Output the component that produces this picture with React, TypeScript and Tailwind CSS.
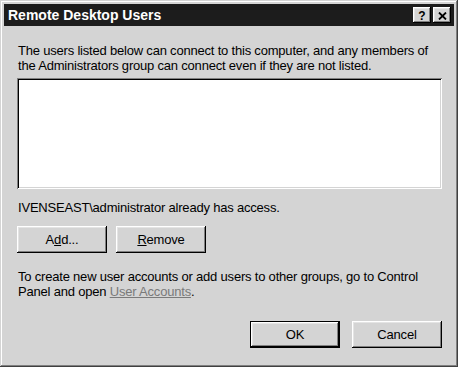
import React from 'react';

const raised =
  'shadow-[inset_-1px_-1px_#000000,inset_1px_1px_#ffffff,inset_-2px_-2px_#808080,inset_2px_2px_#e4e4e4]';

function Button({ children, isDefault = false }: { children: React.ReactNode; isDefault?: boolean }) {
  return (
    <button
      className={`w-[90px] h-[27px] bg-[#d4d4d4] flex items-center justify-center text-[13px] text-black ${
        isDefault
          ? 'border border-black shadow-[inset_-1px_-1px_#000000,inset_1px_1px_#ffffff,inset_-2px_-2px_#808080,inset_2px_2px_#e4e4e4]'
          : raised
      }`}
    >
      {children}
    </button>
  );
}

function TitleButton({ children }: { children: React.ReactNode }) {
  return (
    <div className={`w-[18px] h-[16px] bg-[#d4d4d4] flex items-center justify-center ${raised}`}>
      {children}
    </div>
  );
}

export default function App() {
  return (
    <div
      className="w-[458px] h-[367px] bg-[#d4d4d4] p-[4px] flex flex-col shadow-[inset_-1px_-1px_#404040,inset_1px_1px_#d4d4d4,inset_-2px_-2px_#808080,inset_2px_2px_#ffffff]"
      style={{ fontFamily: '"Liberation Sans", Arial, sans-serif' }}
    >
      {/* Title bar */}
      <div className="h-[22px] bg-[#1c1c1c] flex items-center justify-between pl-[4px] pr-[3px]">
        <span className="text-white font-bold text-[14px] leading-none">Remote Desktop Users</span>
        <div className="flex gap-[2px]">
          <TitleButton>
            <span className="text-black font-bold text-[12px] leading-none mt-[1px]">?</span>
          </TitleButton>
          <TitleButton>
            <svg width="9" height="8" viewBox="0 0 9 8" className="mt-[1px]">
              <path d="M1 0.5 L8 7.5 M8 0.5 L1 7.5" stroke="#000" strokeWidth="1.8" />
            </svg>
          </TitleButton>
        </div>
      </div>

      {/* Body */}
      <div className="flex-1 flex flex-col pl-[13px] pr-[12px] pt-[17px] text-[13px] text-black tracking-[-0.2px]">
        <p className="leading-[15px] pl-[1px]">
          The users listed below can connect to this computer, and any members of the
          Administrators group can connect even if they are not listed.
        </p>

        <div className="mt-[5px] h-[111px] bg-white shadow-[inset_1px_1px_#808080,inset_-1px_-1px_#ffffff,inset_2px_2px_#000000,inset_-2px_-2px_#d4d4d4]" />

        <p className="mt-[11px] leading-[15px] pl-[1px]">IVENSEAST\administrator already has access.</p>

        <div className="mt-[11px] flex gap-[9px]">
          <Button>
            A<span className="underline">d</span>d...
          </Button>
          <Button>
            <span className="underline">R</span>emove
          </Button>
        </div>

        <p className="mt-[16px] leading-[15px] pl-[1px]">
          To create new user accounts or add users to other groups, go to Control Panel and open{' '}
          <span className="text-[#7a7a7a] underline">User Accounts</span>.
        </p>

        <div className="mt-[22px] flex justify-end gap-[12px]">
          <Button isDefault>OK</Button>
          <Button>Cancel</Button>
        </div>
      </div>
    </div>
  );
}
